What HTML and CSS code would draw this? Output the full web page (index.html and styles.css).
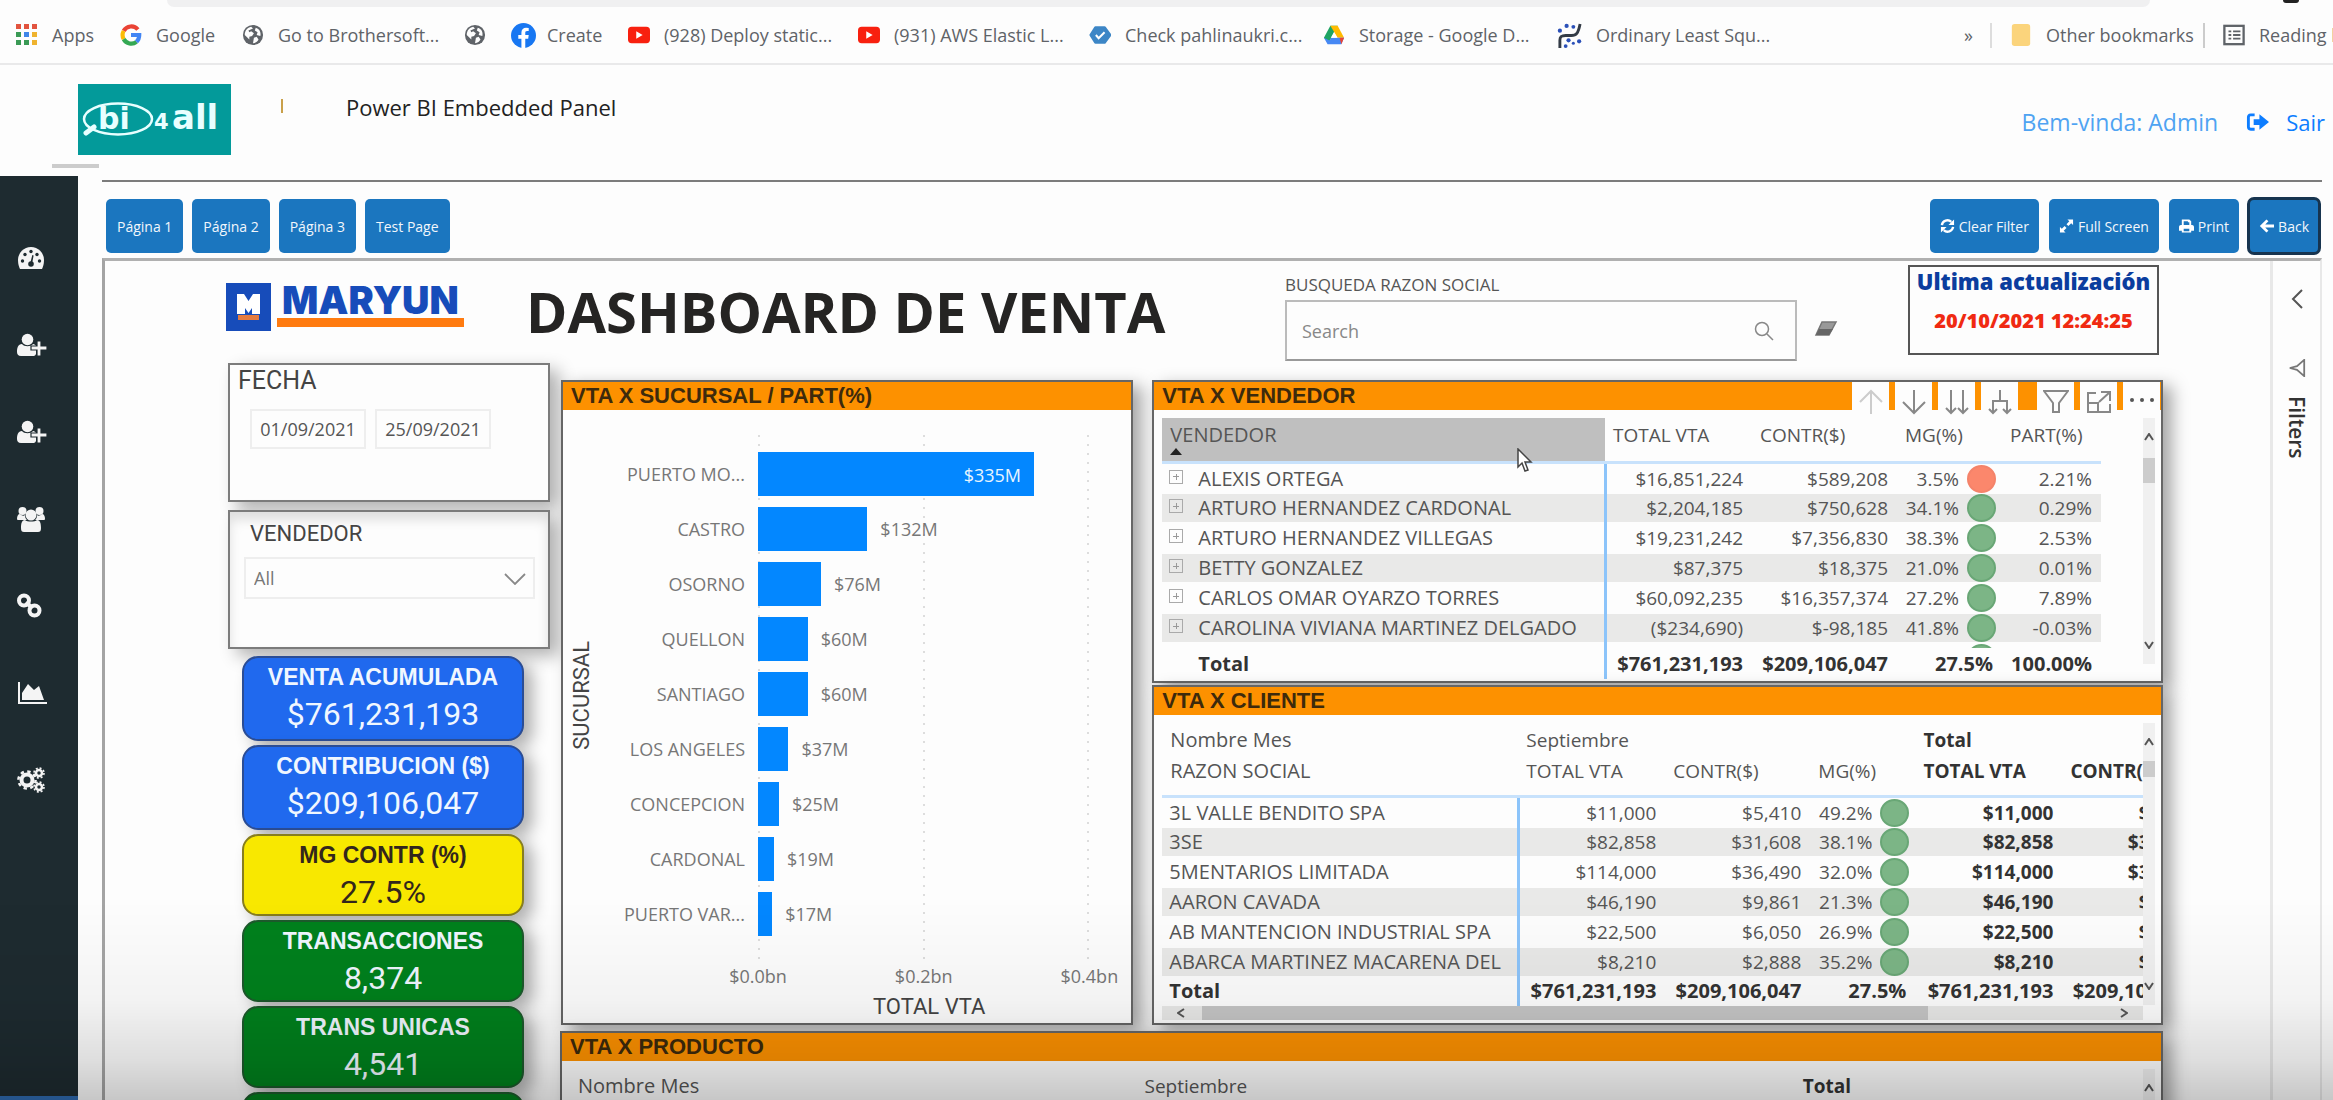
FILE: index.html
```html
<!DOCTYPE html>
<html lang="es">
<head>
<meta charset="utf-8">
<title>Power BI Embedded Panel</title>
<link rel="stylesheet" href="styles.css">
</head>
<body>
<svg class="defs" aria-hidden="true">
  <symbol id="i-globe" viewBox="0 0 24 24"><circle cx="12" cy="12" r="11" fill="#5f6368"/><path d="M10 3c-4 1-7 4-7 9l5 5v-3l3-1 2-3-3-2-2 1-1-2 5-2zM15 4l-1 3 3 2-1 3 4 1c1-4-1-8-5-9zM13 15l-1 6c3 0 5-2 6-4l-2-3z" fill="#fdfdfd"/></symbol>
  <symbol id="i-yt" viewBox="0 0 24 24"><rect y="3" width="24" height="18" rx="4" fill="#f8200f"/><path d="M9 8l7 4-7 4z" fill="#fff"/></symbol>
  <symbol id="i-userplus" viewBox="0 0 30 24"><circle cx="10.500" cy="6.500" r="5.800"/><path d="M5 11c2 3 9 3 11 0 1.500 0 2.500 1 3 2v8c-1 2-2 2-3 2H4c-3 0-4-2-4-4 0-4 1-8 5-8z"/><path d="M20 8h4v5h6v4h-6v6h-4v-6h-6v-4h6z" stroke="#1e2b30" stroke-width="1.200"/></symbol>
</svg>

<div class="tabstrip"><div class="omnibox"></div><span class="avatar"></span></div>
<nav class="bookmarks">
  <a href="#"><svg class="bi" viewBox="0 0 22 22"><g fill="#e2543f"><path d="M0 0h5v5H0zM8 0h5v5H8zM16 0h5v5h-5z"/></g><g fill="#3a9a55"><path d="M0 8h5v5H0zM0 16h5v5H0zM8 16h5v5H8z"/></g><path d="M8 8h5v5H8z" fill="#3f86e8"/><path d="M16 8h5v5h-5zM16 16h5v5h-5z" fill="#efb32f"/></svg>Apps</a>
  <a href="#" class="m-google"><svg class="bi" viewBox="0 0 24 24" fill="none" stroke-width="4.500"><path d="M19.500 6A9.500 9.500 0 0 0 4 7.500" stroke="#ea4335"/><path d="M4 7.500a9.500 9.500 0 0 0 0 9" stroke="#fbbc05"/><path d="M4 16.500a9.500 9.500 0 0 0 14 3" stroke="#34a853"/><path d="M18 19.500c2-2 3-4 3-7.500h-9" stroke="#4285f4"/></svg>Google</a>
  <a href="#" class="m-bro"><svg class="bi"><use href="#i-globe"/></svg>Go to Brothersoft...</a>
  <a href="#" class="m-globe" aria-label="Web"><svg class="bi"><use href="#i-globe"/></svg></a>
  <a href="#" class="m-fb"><svg class="bi big" viewBox="0 0 24 24"><circle cx="12" cy="12" r="12" fill="#1877f2"/><path d="M10 24v-9H7v-3.500h3V9c0-3 2-4.500 4.500-4.500L17 4.700v3h-1.500C14 7.700 13.700 8.500 13.700 9.300v2.200H17l-.5 3.500h-2.800v9z" fill="#fff"/></svg>Create</a>
  <a href="#" class="m-yt"><svg class="bi"><use href="#i-yt"/></svg>(928) Deploy static...</a>
  <a href="#" class="m-yt2"><svg class="bi"><use href="#i-yt"/></svg>(931) AWS Elastic L...</a>
  <a href="#" class="m-check"><svg class="bi" viewBox="0 0 24 24"><path d="M7 4h10l6 8-6 8H7l-5-8z" fill="#3d86c6" stroke="#3d86c6" stroke-width="3" stroke-linejoin="round"/><path d="M7.500 12l3 3.500L17 9" fill="none" stroke="#fff" stroke-width="2.200"/></svg>Check pahlinaukri.c...</a>
  <a href="#" class="m-drive"><svg class="bi" viewBox="0 0 24 24"><path d="M8 2h8L12 9 6 21 1 15z" fill="#1fa463"/><path d="M8 2h8l7 13h-7z" fill="#ffba00"/><path d="M1 15l4 7h15l3-7H9l-2 3z" fill="#4688f4"/><path d="M12 9l3.500 6h-7z" fill="#fff"/><path d="M18 15h5l-3 7z" fill="#ea4335"/></svg>Storage - Google D...</a>
  <a href="#" class="m-ols"><svg class="bi big" viewBox="0 0 26 26"><path d="M3 26V18c0-4 2-5 6-5h6c5 0 7-2 9-12" fill="none" stroke="#333b46" stroke-width="3"/><g fill="#2b50b8"><circle cx="3" cy="8" r="2.200"/><circle cx="10" cy="3" r="2.200"/><circle cx="17" cy="4" r="2"/><circle cx="12" cy="18" r="2.200"/><circle cx="9" cy="24" r="2"/><circle cx="23" cy="19" r="2.200"/><circle cx="17" cy="21" r="1.600"/></g></svg>Ordinary Least Squ...</a>
  <span class="chev">»</span>
  <a href="#" class="m-other"><svg class="bi" viewBox="0 0 24 24"><rect x="2" width="20" height="24" rx="3" fill="#fbd47c"/></svg>Other bookmarks</a>
  <a href="#" class="m-read"><svg class="bi" viewBox="0 0 24 24" fill="none" stroke="#5f6368" stroke-width="2.500"><rect x="1.500" y="2" width="21" height="20"/><path d="M6 8h3M11 8h8M6 12h3M11 12h8M6 16h3M11 16h8" stroke-width="2"/></svg>Reading list</a>
</nav>

<header class="top">
  <svg class="brand" viewBox="0 0 153 71" role="img" aria-label="bi4all"><rect width="153" height="71" fill="#039a9a"/><ellipse cx="40" cy="35" rx="34" ry="15.500" fill="none" stroke="#e8ffff" stroke-width="2.500"/><path d="M8 49l8-6" stroke="#e8ffff" stroke-width="5" stroke-linecap="round"/><text x="20" y="45" class="brand-b">bi</text><text x="76" y="45" class="brand-4">4</text><text x="94" y="45" class="brand-a">all</text></svg>
  <span class="tick"></span>
  <h1>Power BI Embedded Panel</h1>
  <span class="welcome">Bem-vinda: Admin</span>
  <a class="logout" href="#"><svg viewBox="0 0 24 20"><path d="M9 1H5C2 1 1 3 1 5v10c0 2 1 4 4 4h4v-3H5c-1 0-1-1-1-1V5c0-1 1-1 1-1h4z"/><path d="M8 7h6V2l10 8-10 8v-5H8z"/></svg>Sair</a>
</header>
<span class="stub"></span>

<div class="shell">
  <aside class="side">
    <a href="#" aria-label="Dashboard"><svg viewBox="0 0 28 24"><path d="M14 1a13 13 0 0 0-13 13c0 4 1 7 2 9h22c1-2 2-5 2-9A13 13 0 0 0 14 1z"/><g fill="#1e2b30"><circle cx="5.500" cy="15" r="1.700"/><circle cx="8" cy="8.500" r="1.700"/><circle cx="14" cy="5.500" r="1.700"/><circle cx="20" cy="8.500" r="1.700"/><circle cx="22.500" cy="15" r="1.700"/><circle cx="14" cy="18" r="2.800"/><path d="M13.300 17l2-8 1.300.4-1.500 8z"/></g></svg></a>
    <a href="#" aria-label="Nuevo usuario"><svg class="w" viewBox="0 0 30 24"><use href="#i-userplus"/></svg></a>
    <a href="#" aria-label="Nuevo cliente"><svg class="w" viewBox="0 0 30 24"><use href="#i-userplus"/></svg></a>
    <a href="#" aria-label="Usuarios"><svg viewBox="0 0 28 26"><circle cx="5.500" cy="5" r="4"/><circle cx="22.500" cy="5" r="4"/><path d="M0 13c0-3 1-5 3-5 2 2 4 2 5 1 0 3 1 4 2 5H2c-1 0-2 0-2-1zM28 13c0-3-1-5-3-5-2 2-4 2-5 1 0 3-1 4-2 5h8c1 0 2 0 2-1z"/><circle cx="14" cy="9" r="5.500"/><path d="M8 14c2 2 10 2 12 0 3 0 4 3 4 8 0 3-1 4-3 4H7c-2 0-3-1-3-4 0-5 1-8 4-8z"/></svg></a>
    <a href="#" aria-label="Enlaces"><svg viewBox="0 0 28 26" fill="none" stroke="#f4f4f4" stroke-width="4"><circle cx="7" cy="7.500" r="5"/><circle cx="17.500" cy="17.500" r="5"/><path d="M9 9l6.500 6.500"/></svg></a>
    <a href="#" aria-label="Gráficos"><svg class="w" viewBox="0 0 30 24"><path d="M1 1h2v20h27v2H1z"/><path d="M5 19V12l6-9 6 6 5-4 5 14z"/></svg></a>
    <a href="#" aria-label="Configuración"><svg viewBox="0 0 28 26" fill="none" stroke="#f4f4f4"><circle cx="10" cy="13" r="5.500" stroke-width="4"/><circle cx="10" cy="13" r="8.600" stroke-width="2.500" stroke-dasharray="3.400 3.350"/><circle cx="22" cy="6" r="3" stroke-width="2.500"/><circle cx="22" cy="6" r="5" stroke-width="1.600" stroke-dasharray="2 1.930"/><circle cx="22" cy="20" r="3" stroke-width="2.500"/><circle cx="22" cy="20" r="5" stroke-width="1.600" stroke-dasharray="2 1.930"/></svg></a>
    <span class="side-foot"></span>
  </aside>

  <main class="main">
    <div class="toolbar">
      <button class="btn wide">Página 1</button><button class="btn wide">Página 2</button><button class="btn wide">Página 3</button><button class="btn wide">Test Page</button>
      <button class="btn right"><svg viewBox="0 0 16 16" fill="none" stroke="#fff" stroke-width="2.500"><path d="M2 7a6 6 0 0 1 10-3.500M14 9a6 6 0 0 1-10 3.500"/><path d="M15 1v6H9zM1 15V9h6z" fill="#fff" stroke="none"/></svg>Clear Filter</button>
      <button class="btn"><svg viewBox="0 0 16 16" fill="#fff"><path d="M9 1h6v6l-2-2-3 3-2-2 3-3zM7 15H1V9l2 2 3-3 2 2-3 3z"/></svg>Full Screen</button>
      <button class="btn"><svg viewBox="0 0 16 16" fill="#fff"><path d="M3 1h8l2 2v4h-2V4H9.500V2.800H5V7H3z"/><path d="M0 13V9c0-1 1-2 2-2h12c1 0 2 1 2 2v4h-3v2H3v-2zm5-1v1.500h6V11H5z"/></svg>Print</button>
      <button class="btn focus"><svg viewBox="0 0 16 16" fill="none" stroke="#fff" stroke-width="3"><path d="M9 2L3 8l6 6M3 8h13"/></svg>Back</button>
    </div>

    <div class="report">
      <div class="canvas">
        <div class="headline">
          <div class="maryun">
            <svg viewBox="0 0 45 48"><rect width="45" height="48" fill="#174cba"/><path d="M11 11h7l4.500 7 4.500-7h7v20h-8v-6l-3.500 5-3.500-5v6h-8z" fill="#fff"/><path d="M12 32h21v5H12z" fill="#e57b3f"/></svg>
            <span class="word">MARYUN</span>
          </div>
          <h2>DASHBOARD DE VENTA</h2>
          <div class="searchbox">
            <label for="q">BUSQUEDA RAZON SOCIAL</label>
            <div class="field"><input id="q" type="text" placeholder="Search"><svg viewBox="0 0 20 20" fill="none" stroke="#888" stroke-width="1.500"><circle cx="8" cy="8" r="6.500"/><path d="M13 13l6 6"/></svg></div>
          </div>
          <svg class="eraser" viewBox="0 0 24 16"><path d="M8 1h14l-7 13H2z" fill="#999" stroke="#777" stroke-width="1.500"/><path d="M5 8h14l-4 6H2z" fill="#666"/></svg>
          <div class="updated"><b>Ultima actualización</b><strong>20/10/2021 12:24:25</strong></div>
        </div>

        <div class="cols">
          <div class="left">
            <section class="card date"><h3>FECHA</h3><div class="dates"><input type="text" value="01/09/2021" aria-label="Desde"><input type="text" value="25/09/2021" aria-label="Hasta"></div></section>
            <section class="card seller"><label for="sel">VENDEDOR</label><div class="selwrap"><select id="sel"><option>All</option></select><svg viewBox="0 0 22 12" fill="none" stroke="#888" stroke-width="1.800"><path d="M1 1l10 10L21 1"/></svg></div></section>
            <div class="kpis">
              <div class="kpi blue"><span>VENTA ACUMULADA</span><em>$761,231,193</em></div>
              <div class="kpi blue"><span>CONTRIBUCION ($)</span><em>$209,106,047</em></div>
              <div class="kpi yellow"><span>MG CONTR (%)</span><em>27.5%</em></div>
              <div class="kpi green"><span>TRANSACCIONES</span><em>8,374</em></div>
              <div class="kpi green"><span>TRANS UNICAS</span><em>4,541</em></div>
              <div class="kpi green"></div>
            </div>
          </div>

          <section class="panel p-chart">
            <h3>VTA X SUCURSAL / PART(%)</h3>
            <div class="chart">
              <div class="ytitle"><span>SUCURSAL</span></div>
              <div class="names"><span>PUERTO MO...</span><span>CASTRO</span><span>OSORNO</span><span>QUELLON</span><span>SANTIAGO</span><span>LOS ANGELES</span><span>CONCEPCION</span><span>CARDONAL</span><span>PUERTO VAR...</span></div>
              <div class="plot">
                <div class="row"><i style="width:83.3%">$335M</i></div>
                <div class="row"><i style="width:33%"></i>$132M</div>
                <div class="row"><i style="width:19%"></i>$76M</div>
                <div class="row"><i style="width:15%"></i>$60M</div>
                <div class="row"><i style="width:15%"></i>$60M</div>
                <div class="row"><i style="width:9.2%"></i>$37M</div>
                <div class="row"><i style="width:6.3%"></i>$25M</div>
                <div class="row"><i style="width:4.8%"></i>$19M</div>
                <div class="row"><i style="width:4.3%"></i>$17M</div>
              </div>
              <div class="axis"><span>$0.0bn</span><span>$0.2bn</span><span>$0.4bn</span></div>
              <div class="xtitle">TOTAL VTA</div>
            </div>
          </section>

          <section class="panel p-vend">
            <div class="bar"><h3>VTA X VENDEDOR</h3>
              <button class="faint" aria-label="Drill up"><svg viewBox="0 0 26 26"><path d="M13 25V2M2 13L13 2l11 11"/></svg></button>
              <button aria-label="Drill down"><svg viewBox="0 0 26 26"><path d="M13 1v23M2 13l11 11 11-11"/></svg></button>
              <button aria-label="Next level"><svg viewBox="0 0 26 26"><path d="M7 1v23M2 19l5 5 5-5M19 1v23M14 19l5 5 5-5"/></svg></button>
              <button aria-label="Expand all"><svg viewBox="0 0 26 26"><path d="M13 1v11M6 24V12h14v12M2 20l4 4 4-4M16 20l4 4 4-4"/></svg></button>
              <button class="gap" aria-label="Filter"><svg viewBox="0 0 26 26"><path d="M1 2h24l-9 12v9h-6v-9z"/></svg></button>
              <button aria-label="Focus mode"><svg viewBox="0 0 26 26"><path d="M10 4H2v19h22v-8M2 14h10v9M15 3h9v9M24 3L13 13"/></svg></button>
              <button aria-label="More options"><svg viewBox="0 0 26 26"><g fill="#555" stroke="none"><circle cx="3" cy="11" r="2"/><circle cx="13" cy="11" r="2"/><circle cx="23" cy="11" r="2"/></g></svg></button>
            </div>
            <div class="grid">
              <table class="t vend">
                <colgroup><col><col class="c1"><col class="c2"><col class="c3"><col class="c4"></colgroup>
                <thead><tr><th class="sorted">VENDEDOR<svg class="sort" viewBox="0 0 12 7"><path d="M6 0l6 7H0z"/></svg></th><th>TOTAL VTA</th><th>CONTR($)</th><th>MG(%)</th><th>PART(%)</th></tr></thead>
                <tbody>
                <tr><td><button class="plus" aria-label="Expandir"></button>ALEXIS ORTEGA</td><td>$16,851,224</td><td>$589,208</td><td class="mg">3.5%<i class="dot red"></i></td><td>2.21%</td></tr>
                <tr><td><button class="plus" aria-label="Expandir"></button>ARTURO HERNANDEZ CARDONAL</td><td>$2,204,185</td><td>$750,628</td><td class="mg">34.1%<i class="dot"></i></td><td>0.29%</td></tr>
                <tr><td><button class="plus" aria-label="Expandir"></button>ARTURO HERNANDEZ VILLEGAS</td><td>$19,231,242</td><td>$7,356,830</td><td class="mg">38.3%<i class="dot"></i></td><td>2.53%</td></tr>
                <tr><td><button class="plus" aria-label="Expandir"></button>BETTY GONZALEZ</td><td>$87,375</td><td>$18,375</td><td class="mg">21.0%<i class="dot"></i></td><td>0.01%</td></tr>
                <tr><td><button class="plus" aria-label="Expandir"></button>CARLOS OMAR OYARZO TORRES</td><td>$60,092,235</td><td>$16,357,374</td><td class="mg">27.2%<i class="dot"></i></td><td>7.89%</td></tr>
                <tr><td><button class="plus" aria-label="Expandir"></button>CAROLINA VIVIANA MARTINEZ DELGADO</td><td>($234,690)</td><td>$-98,185</td><td class="mg">41.8%<i class="dot"></i></td><td>-0.03%</td></tr>
                <tr class="cut"><td></td><td></td><td></td><td class="mg"><div><i class="dot"></i></div></td><td></td></tr>
                </tbody>
                <tfoot><tr><td class="ind">Total</td><td>$761,231,193</td><td>$209,106,047</td><td>27.5%</td><td>100.00%</td></tr></tfoot>
              </table>
              <div class="vbar"><svg viewBox="0 0 10 8"><path d="M1 7l4-6 4 6"/></svg><span class="thumb"></span><svg class="dn" viewBox="0 0 10 8"><path d="M1 1l4 6 4-6"/></svg></div>
            </div>
            <svg class="cursor" viewBox="0 0 16 24"><path d="M1 1v18l4-4 3 8 3-1-3-8h6z" fill="#fff" stroke="#444" stroke-width="1.500"/></svg>
          </section>

          <section class="panel p-cli">
            <h3>VTA X CLIENTE</h3>
            <div class="grid">
              <div class="clip">
              <table class="t cli">
                <colgroup><col class="c0"><col class="c1"><col class="c2"><col class="c3"><col class="c1"><col class="c2"></colgroup>
                <thead>
                <tr><th>Nombre Mes</th><th colspan="3">Septiembre</th><th colspan="2" class="b">Total</th></tr>
                <tr class="h2"><th>RAZON SOCIAL</th><th>TOTAL VTA</th><th>CONTR($)</th><th>MG(%)</th><th class="b">TOTAL VTA</th><th class="b">CONTR($)</th></tr></thead>
                <tbody>
                <tr><td>3L VALLE BENDITO SPA</td><td>$11,000</td><td>$5,410</td><td class="mg">49.2%<i class="dot"></i></td><td class="b">$11,000</td><td class="b">$5,410</td></tr>
                <tr><td>3SE</td><td>$82,858</td><td>$31,608</td><td class="mg">38.1%<i class="dot"></i></td><td class="b">$82,858</td><td class="b">$31,608</td></tr>
                <tr><td>5MENTARIOS LIMITADA</td><td>$114,000</td><td>$36,490</td><td class="mg">32.0%<i class="dot"></i></td><td class="b">$114,000</td><td class="b">$36,490</td></tr>
                <tr><td>AARON CAVADA</td><td>$46,190</td><td>$9,861</td><td class="mg">21.3%<i class="dot"></i></td><td class="b">$46,190</td><td class="b">$9,861</td></tr>
                <tr><td>AB MANTENCION INDUSTRIAL SPA</td><td>$22,500</td><td>$6,050</td><td class="mg">26.9%<i class="dot"></i></td><td class="b">$22,500</td><td class="b">$6,050</td></tr>
                <tr><td>ABARCA MARTINEZ MACARENA DEL</td><td>$8,210</td><td>$2,888</td><td class="mg">35.2%<i class="dot"></i></td><td class="b">$8,210</td><td class="b">$2,888</td></tr>
                </tbody>
                <tfoot><tr><td>Total</td><td>$761,231,193</td><td>$209,106,047</td><td>27.5%</td><td>$761,231,193</td><td>$209,106,047</td></tr></tfoot>
              </table>
              <div class="hbar"><svg viewBox="0 0 8 10"><path d="M7 1L1 5l6 4"/></svg><span class="thumb"></span><svg viewBox="0 0 8 10"><path d="M1 1l6 4-6 4"/></svg></div>
              </div>
              <div class="vbar short"><svg viewBox="0 0 10 8"><path d="M1 7l4-6 4 6"/></svg><span class="thumb"></span><svg class="dn" viewBox="0 0 10 8"><path d="M1 1l4 6 4-6"/></svg></div>
            </div>
          </section>

          <section class="panel p-prod">
            <h3>VTA X PRODUCTO</h3>
            <div class="grid">
              <table class="t prod"><colgroup><col class="k0"><col class="k1"><col></colgroup><thead><tr><th>Nombre Mes</th><th>Septiembre</th><th class="b">Total</th></tr></thead></table>
              <div class="vbar"><svg viewBox="0 0 10 8"><path d="M1 7l4-6 4 6"/></svg></div>
            </div>
          </section>
        </div>
      </div>
      <aside class="filters">
        <button aria-label="Expandir filtros"><svg class="fc" viewBox="0 0 12 20" fill="none" stroke="#555" stroke-width="2"><path d="M11 1L2 10l9 9"/></svg></button>
        <svg class="ff" viewBox="0 0 20 20" fill="none" stroke="#777" stroke-width="2"><path d="M18 1v18l-8-7-8-2 8-2z"/></svg>
        <span>Filters</span>
      </aside>
    </div>
  </main>
</div>
<div class="shade"></div>
</body>
</html>
```
FILE: styles.css
```css
* { box-sizing: border-box; }
body { margin: 0; height: 100vh; overflow: hidden; display: flex; flex-direction: column; background: #fdfdfd; color: #555; font-family: "Open Sans", "Noto Sans", sans-serif; font-size: 18px; }
h1, h2, h3 { margin: 0; font-weight: 400; }
button, input, select { font: inherit; color: inherit; }
a { color: inherit; text-decoration: none; }
em, i { font-style: normal; }
.defs { position: absolute; width: 0; height: 0; }

/* browser chrome */
.tabstrip { display: flex; height: 7px; flex: none; }
.omnibox { width: 85%; margin-left: 167px; background: #f0f0f1; border-radius: 0 0 14px 14px; }
.avatar { width: 16px; height: 3px; margin-left: 133px; background: #222; border-radius: 0 0 8px 8px; }
.bookmarks { display: flex; align-items: center; flex: none; height: 58px; border-bottom: 2px solid #e9e9ea; padding-left: 16px; white-space: nowrap; overflow: hidden; color: #5f6368; }
.bookmarks a { display: flex; align-items: center; flex: none; gap: 14px; }
.bi { width: 22px; height: 22px; flex: none; }
.bi.big { width: 25px; height: 25px; }
.bookmarks .m-google { width: 122px; margin-left: 26px; }
.bookmarks .m-bro { width: 222px; }
.bookmarks .m-globe { width: 47px; }
.bookmarks .m-fb { width: 117px; gap: 11px; }
.bookmarks .m-yt { width: 230px; }
.bookmarks .m-yt2 { width: 231px; }
.bookmarks .m-check { width: 234px; }
.bookmarks .m-drive { width: 234px; }
.chev { margin-left: auto; }
.bookmarks .m-other { border-left: 2px solid #ddd; margin-left: 17px; padding-left: 18px; height: 25px; width: 213px; }
.bookmarks .m-read { border-left: 2px solid #ccc; padding-left: 18px; height: 25px; width: 130px; }

/* page header */
.top { display: flex; align-items: flex-start; flex: none; height: 99px; padding: 19px 8px 0 78px; color: #222; }
.brand { width: 153px; height: 71px; }
.brand text { fill: #e8ffff; font-family: "DejaVu Sans", sans-serif; font-weight: 700; }
.brand-b { font-size: 30px; }
.brand-4 { font-size: 21px; }
.brand-a { font-size: 34px; }
.tick { width: 2px; height: 14px; margin: 15px 63px 0 50px; background: #c9a04a; }
h1 { font-size: 22px; line-height: 30px; margin-top: 8px; }
.welcome { margin: 22px 28px 0 auto; font-size: 23px; line-height: 32px; color: #4fa3f2; }
.logout { display: flex; align-items: center; gap: 17px; margin-top: 22px; font-size: 22px; line-height: 32px; color: #0d7dff; }
.logout svg { width: 23px; height: 20px; fill: #0d7dff; }
.stub { width: 47px; height: 4px; margin: 0 0 8px 52px; flex: none; background: #ccc; }

/* shell */
.shell { display: flex; flex: 1; min-height: 0; }
.side { position: relative; width: 78px; flex: none; display: flex; flex-direction: column; background: #1e2b30; padding-top: 38px; }
.side a { display: flex; align-items: center; height: 87px; padding-left: 17px; }
.side svg { width: 28px; height: 26px; fill: #f4f4f4; }
.side svg[fill="none"] { fill: none; }
.side svg.w { width: 30px; height: 24px; }
.side-foot { margin-top: auto; height: 4px; background: #2f6ab0; }
.main { flex: 1; min-width: 0; margin: 4px 11px 0 24px; border-top: 2px solid #7c7c7c; display: flex; flex-direction: column; }
.toolbar { display: flex; gap: 10px; padding: 17px 3px 5px 4px; }
.btn { display: flex; align-items: center; justify-content: center; gap: 4px; height: 54px; padding: 0 10px; border: 0; border-radius: 5px; background: #1b76bf; color: #f2f7fc; font-size: 14px; white-space: nowrap; }
.btn svg { width: 15px; height: 16px; }
.wide { padding: 0 11px; margin-right: -1px; }
.right { margin-left: auto; }
.focus { outline: 3px solid #17344f; outline-offset: -1px; }
.report { display: flex; flex: 1; min-height: 0; border-top: 3px solid #b0b0b0; border-left: 3px solid #a4a4a4; border-right: 2px solid #e8e8e8; }
.canvas { flex: 1; min-width: 0; padding: 0 107px 0 123px; overflow: hidden; }

/* report heading */
.headline { display: flex; align-items: flex-start; height: 102px; padding-right: 4px; }
.maryun { display: flex; gap: 6px; width: 300px; margin: 22px 0 0 -2px; }
.maryun svg { width: 45px; height: 48px; flex: none; }
.word { height: 44px; padding: 0 5px; border-bottom: 9px solid #ff7b10; font: 900 38px/35px Inter, sans-serif; color: #174cba; }
h2 { font-size: 56px; line-height: 64px; font-weight: 700; color: #252423; white-space: nowrap; margin-top: 18px; }
.searchbox { width: 512px; margin: 12px 17px 0 auto; }
.searchbox label { display: block; line-height: 24px; margin-bottom: 3px; font-size: 17px; }
.field { display: flex; align-items: center; height: 61px; border: 2px solid #bbb; border-bottom-color: #999; padding: 0 21px 0 15px; }
.field input { flex: 1; min-width: 0; border: 0; padding: 0; background: none; font-size: 18px; outline: 0; }
.field input::placeholder { color: #888; }
.field svg { width: 20px; height: 20px; }
.eraser { width: 24px; height: 16px; margin: 60px 70px 0 0; }
.updated { display: flex; flex-direction: column; align-items: center; width: 251px; height: 90px; margin-top: 4px; border: 2px solid #555; font-weight: 700; }
.updated b { font-size: 22px; line-height: 28px; color: #0b3d9e; }
.updated strong { font-size: 20px; line-height: 52px; color: #f02a12; }

/* report grid */
.cols { display: grid; grid-template-columns: 322px minmax(0, 593fr) minmax(0, 1019fr); grid-template-rows: 17px 303px 342px auto; }
.left { grid-column: 1; grid-row: 1 / span 4; }
.card { background: #fdfdfd; border: 2px solid #7c7c7c; box-shadow: 9px 7px 16px rgba(0, 0, 0, .3); height: 139px; }
.card h3 { font: 400 25px/32px Roboto, sans-serif; padding-left: 8px; color: #444; }
.dates { display: flex; gap: 9px; margin: 12px 0 0 20px; }
.dates input { width: 116px; height: 40px; border: 2px solid #eee; background: none; text-align: center; font-size: 18px; padding: 0; }
.seller { margin-top: 8px; padding: 7px 13px 0 14px; box-shadow: 9px 7px 16px rgba(0, 0, 0, .3), inset 0 8px 12px rgba(0, 0, 0, .12); }
.seller label { display: block; padding-left: 6px; font: 400 22px/30px Roboto, sans-serif; color: #444; }
.selwrap { position: relative; margin-top: 8px; }
.selwrap select { width: 100%; height: 42px; appearance: none; border: 2px solid #eee; background: none; padding: 0 8px; color: #777; }
.selwrap svg { position: absolute; right: 9px; top: 16px; width: 22px; height: 12px; }
.kpis { display: flex; flex-direction: column; gap: 4px; margin: 7px 26px 0 14px; }
.kpi { height: 82px; border: 2px solid; border-radius: 16px; text-align: center; color: #f0f7ff; box-shadow: 9px 7px 16px rgba(0, 0, 0, .3); }
.kpi span { display: block; padding-top: 4px; font: 700 23px/30px "Liberation Sans", sans-serif; }
.kpi em { display: block; font: 400 32px/44px Roboto, sans-serif; }
.blue { height: 85px; background: #2069ee; border-color: #2b4d95; }
.yellow { background: #f8e800; border-color: #877e1f; color: #33261c; }
.green { background: #00811d; border-color: #1d5a2c; }

.panel { position: relative; background: #fdfdfd; border: 2px solid #666; box-shadow: 9px 6px 16px rgba(0, 0, 0, .35); }
.panel h3 { height: 28px; padding-left: 8px; background: #fd9100; color: #3d2a0c; font: 700 22px/28px "Liberation Sans", sans-serif; white-space: nowrap; }
.p-chart { grid-column: 2; grid-row: 2 / span 2; margin: 0 10px 0 11px; }
.p-vend { grid-column: 3; grid-row: 2; margin-left: 9px; }
.p-cli { grid-column: 3; grid-row: 3; margin: 2px 0 0 9px; }
.p-prod { grid-column: 2 / span 2; grid-row: 4; margin: 6px 0 0 10px; height: 300px; }

/* bar chart */
.chart { display: grid; grid-template-columns: 38px 144px minmax(0, 1fr); padding: 25px 42px 0 0; color: #777; }
.ytitle { display: flex; align-items: center; justify-content: center; padding-bottom: 5px; }
.ytitle span { writing-mode: vertical-rl; transform: rotate(180deg); font: 400 22px/26px Roboto, sans-serif; color: #444; }
.names, .plot { display: flex; flex-direction: column; gap: 11px; padding: 17px 0 25px; }
.names span { height: 44px; line-height: 44px; text-align: right; white-space: nowrap; }
.plot { margin-left: 13px; background: repeating-linear-gradient(#ddd 0 2px, transparent 2px 9px) 0 0 / 2px 100% no-repeat, repeating-linear-gradient(#ddd 0 2px, transparent 2px 9px) 50% 0 / 2px 100% no-repeat, repeating-linear-gradient(#ddd 0 2px, transparent 2px 9px) 100% 0 / 2px 100% no-repeat; }
.row { display: flex; align-items: center; gap: 13px; height: 44px; }
.row i { height: 44px; line-height: 46px; background: #0387ff; color: #e8f5ff; text-align: right; padding-right: 13px; }
.row i:empty { padding: 0; }
.axis { grid-column: 3; display: flex; justify-content: space-between; margin: 0 -30px 0 -17px; line-height: 30px; }
.axis span { width: 60px; text-align: center; }
.xtitle { grid-column: 3; padding-left: 24px; text-align: center; font: 400 22px/32px Roboto, sans-serif; color: #444; }

/* visual header */
.bar { display: flex; gap: 6px; height: 28px; background: #fd9100; padding-right: 1px; }
.bar h3 { flex: 1; }
.bar button { width: 37px; height: 28px; padding: 7px 0 0; border: 0; background: #fdfdfd; overflow: visible; }
.bar .gap { margin-left: 13px; }
.bar svg { display: block; width: 26px; height: 26px; margin: 0 auto; fill: none; stroke: #888; stroke-width: 2; position: relative; z-index: 1; }
.bar .faint svg { stroke: #ccc; }

/* tables */
.grid { display: flex; padding: 8px 6px 0 8px; }
.t { border-collapse: collapse; table-layout: fixed; font-size: 19px; color: #555; }
.t th, .t td { padding: 0 9px 0 8px; line-height: 28px; white-space: nowrap; overflow: hidden; }
.t th { text-align: left; font-weight: 400; vertical-align: top; }
.t td { text-align: right; }
.t th:first-child, .t td:first-child { font-size: 20px; }
.t td:first-child { text-align: left; padding: 0 0 0 7px; }
.t .b { font-weight: 700; color: #333; }
.t tbody tr { height: 32px; }
.t tbody tr:nth-child(even) { height: 28px; background: #e9e9e8; }
.t tbody td:first-child, .t tfoot td:first-child { border-right: 3px solid #8cc4fa; }
.t tfoot td { font-weight: 700; color: #333; font-size: 20px; }
.c0 { width: 356px; } .c1 { width: 147px; } .c2 { width: 145px; } .c3 { width: 105px; } .c4 { width: 99px; }
.t .mg { padding-right: 6px; overflow: visible; }
.dot { display: inline-block; vertical-align: top; width: 29px; height: 28px; margin-left: 8px; border-radius: 50%; background: #7cb586; border: 2px solid #69a776; }
.red { background: #fb876c; border-color: #f4836a; }
.vend { flex: 1; min-width: 0; }
.vend thead tr { height: 44px; }
.vend thead th { padding-top: 3px; border-bottom: 3px solid #c8e2fc; }
.vend .sorted { background: #bfbfbf; }
.sort { display: block; width: 12px; height: 7px; fill: #222; margin-top: -1px; }
.plus { width: 14px; height: 14px; margin: 5px 15px 0 0; padding: 0; border: 1px solid #aaa; vertical-align: top; background: linear-gradient(#999, #999) center / 6px 1px no-repeat, linear-gradient(#999, #999) center / 1px 6px no-repeat; }
.t tbody tr.cut { height: 6px; }
.t .cut td { line-height: 0; }
.cut div { height: 4px; overflow: hidden; margin-top: 2px; }
.t tfoot td.ind { padding-left: 36px; }
.vend tfoot tr { height: 31px; }
.vbar { display: flex; flex-direction: column; align-items: center; width: 12px; margin-left: 42px; height: 246px; background: #f0f0f0; padding-top: 15px; }
.vbar svg { width: 10px; height: 8px; fill: none; stroke: #555; stroke-width: 2; }
.vbar .thumb { width: 12px; height: 25px; margin-top: 17px; background: #ccc; }
.vbar .dn { margin: auto 0 15px; }
.cursor { position: absolute; left: 36%; top: 66px; width: 16px; height: 24px; }
.clip { flex: 1; min-width: 0; overflow: hidden; }
.cli { width: 1045px; }
.cli th { padding-top: 3px; }
.cli thead tr { height: 30px; }
.cli thead .h2 { height: 42px; }
.h2 th { border-bottom: 3px solid #c8e2fc; }
.cli tfoot tr { height: 30px; }
.hbar { display: flex; align-items: center; justify-content: space-between; height: 14px; background: #e8e8e7; padding: 0 15px; }
.hbar svg { width: 8px; height: 10px; fill: none; stroke: #555; stroke-width: 2; }
.hbar .thumb { flex: 1; height: 14px; margin: 0 192px 0 17px; background: #c5c5c5; }
.vbar.short { margin-left: 0; height: 282px; }
.short .thumb { height: 16px; margin-top: 15px; }
.prod { flex: 1; height: 30px; }
.prod th { padding-top: 3px; }
.k0 { width: 37%; } .k1 { width: 43%; }

/* filter pane */
.filters { width: 50px; flex: none; border-left: 3px solid #e8e8e8; display: flex; flex-direction: column; align-items: center; padding-top: 28px; color: #333; }
.filters button { border: 0; background: none; padding: 0; height: 20px; }
.fc { width: 12px; height: 20px; }
.ff { width: 18px; height: 18px; margin: 50px 0 19px; }
.filters span { writing-mode: vertical-rl; font-weight: 600; font-size: 21px; }

.shade { position: fixed; inset: auto 0 0; height: 200px; pointer-events: none; background: linear-gradient(rgba(0, 0, 0, 0), rgba(0, 0, 0, .04) 50%, rgba(0, 0, 0, .12) 80%, rgba(0, 0, 0, .21)); }
```
